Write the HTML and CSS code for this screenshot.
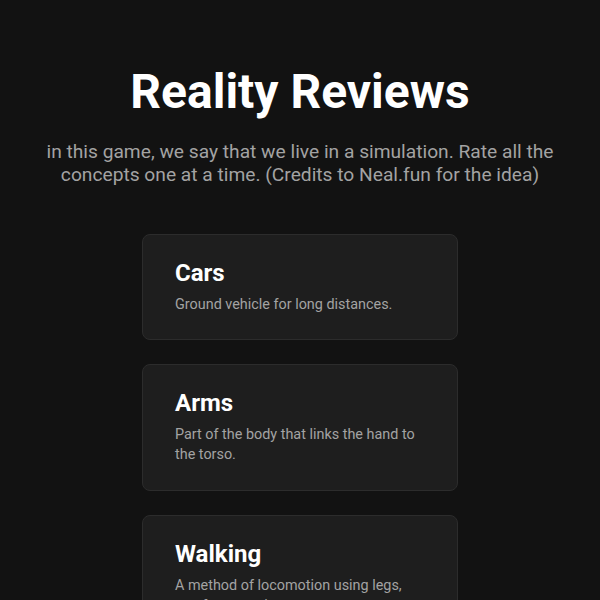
FILE: index.html
```html
<!DOCTYPE html>
<html lang="en">
<head>
<meta charset="utf-8">
<title>Reality Reviews</title>
<link rel="stylesheet" href="styles.css">
</head>
<body>
<main class="page">
  <header class="intro">
    <h1 class="title">Reality Reviews</h1>
    <p class="subtitle">in this game, we say that we live in a simulation. Rate all the concepts one at a time. (Credits to Neal.fun for the idea)</p>
  </header>
  <section class="cards">
    <article class="card">
      <h2 class="card-title">Cars</h2>
      <p class="card-desc">Ground vehicle for long distances.</p>
    </article>
    <article class="card">
      <h2 class="card-title">Arms</h2>
      <p class="card-desc">Part of the body that links the hand to the torso.</p>
    </article>
    <article class="card">
      <h2 class="card-title">Walking</h2>
      <p class="card-desc">A method of locomotion using legs, one foot at a time.</p>
    </article>
  </section>
</main>
</body>
</html>
```

FILE: styles.css
```css
html, body {
  margin: 0;
  padding: 0;
  background: #121212;
  color: #ffffff;
  font-family: Roboto, "Noto Sans", sans-serif;
}

.page {
  display: flex;
  flex-direction: column;
  align-items: center;
  padding-top: 64px;
}

.intro {
  text-align: center;
  width: 560px;
}

.title {
  margin: 0;
  font-size: 48px;
  font-weight: 700;
  line-height: 56px;
}

.subtitle {
  margin: 21px 0 0;
  font-size: 19.2px;
  line-height: 22.5px;
  color: #a3a3a3;
}

.cards {
  margin-top: 48px;
  display: flex;
  flex-direction: column;
  gap: 24px;
  width: 316px;
}

.card {
  background: #1e1e1e;
  border: 1px solid #2c2c2c;
  border-radius: 8px;
  padding: 24px 32px;
}

.card-title {
  margin: 0;
  font-size: 24px;
  font-weight: 700;
  line-height: 28px;
}

.card-desc {
  margin: 8px 0 0;
  font-size: 14.4px;
  line-height: 20.2px;
  color: #a3a3a3;
}
```
